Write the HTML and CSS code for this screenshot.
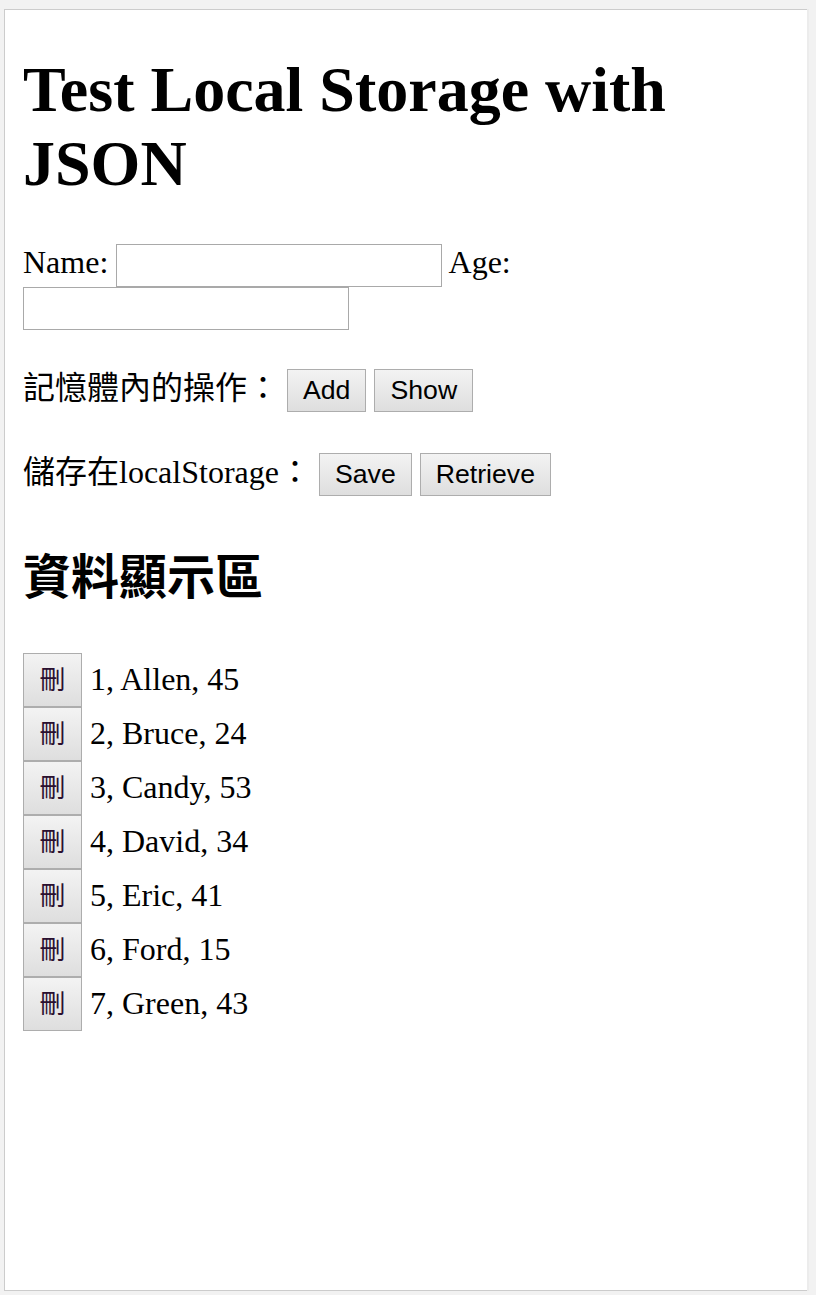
FILE: index.html
```html
<!DOCTYPE html>
<html lang="zh-Hant">
<head>
<meta charset="utf-8">
<title>Test Local Storage with JSON</title>
<link rel="stylesheet" href="styles.css">
</head>
<body>
<div class="frame">
  <div class="page">
    <h1>Test Local Storage with JSON</h1>
    <p class="form">Name: <input type="text" class="field"> Age: <input type="text" class="field"></p>
    <p class="ops">記憶體內的操作： <button class="btn">Add</button> <button class="btn">Show</button></p>
    <p class="ops">儲存在localStorage： <button class="btn">Save</button> <button class="btn">Retrieve</button></p>
    <h2>資料顯示區</h2>
    <div class="list">
      <div class="item"><button class="btn del">刪</button><span class="label">1, Allen, 45</span></div>
      <div class="item"><button class="btn del">刪</button><span class="label">2, Bruce, 24</span></div>
      <div class="item"><button class="btn del">刪</button><span class="label">3, Candy, 53</span></div>
      <div class="item"><button class="btn del">刪</button><span class="label">4, David, 34</span></div>
      <div class="item"><button class="btn del">刪</button><span class="label">5, Eric, 41</span></div>
      <div class="item"><button class="btn del">刪</button><span class="label">6, Ford, 15</span></div>
      <div class="item"><button class="btn del">刪</button><span class="label">7, Green, 43</span></div>
    </div>
  </div>
</div>
</body>
</html>
```
FILE: styles.css
```css
html, body {
  margin: 0;
  padding: 0;
}
body {
  background: #f2f2f2;
  overflow: hidden;
}
.frame {
  box-sizing: border-box;
  margin: 9px 9px 0 4px;
  width: 803px;
  height: 1282px;
  background: #ffffff;
  border: 1px solid #cccccc;
  border-right: none;
  box-shadow: 2px 0 0 #ececec;
}
.page {
  padding: 0 16px 0 18px;
  font-family: "Liberation Serif", "Noto Sans CJK TC", serif;
  font-size: 32px;
  color: #000;
}
h1 {
  font-family: "Liberation Serif", serif;
  font-size: 64px;
  font-weight: bold;
  line-height: 74px;
  margin: 43px 0;
}
.form {
  margin: 32px 0;
  line-height: 37px;
}
.field {
  box-sizing: border-box;
  width: 326px;
  height: 43px;
  margin: 0;
  padding: 0 4px;
  border: 1px solid #a9a9a9;
  background: #fff;
  vertical-align: top;
  font-family: "Liberation Sans", sans-serif;
  font-size: 26px;
}
.ops {
  margin: 32px 0;
  line-height: 52px;
}
.btn {
  box-sizing: border-box;
  height: 43px;
  margin: 7px 0 0 0;
  padding: 0 15px;
  border: 1px solid #adadad;
  border-radius: 0;
  background: linear-gradient(#f3f3f3, #dedede);
  color: #000;
  font-family: "Liberation Sans", "Noto Sans CJK TC", sans-serif;
  font-size: 26.67px;
  line-height: 41px;
  vertical-align: top;
}
h2 {
  font-family: "Noto Sans CJK TC", sans-serif;
  font-size: 48px;
  font-weight: bold;
  line-height: 70px;
  margin: 40px 0;
}
.list {
  margin-top: 45px;
}
.item {
  display: flex;
  height: 54px;
}
.del {
  width: 59px;
  height: 54px;
  margin: 0;
  padding: 0;
  font-size: 26px;
  line-height: 52px;
  color: #2a1030;
}
.label {
  margin-left: 8px;
  padding-top: 8px;
  line-height: 37px;
  white-space: nowrap;
}
```
